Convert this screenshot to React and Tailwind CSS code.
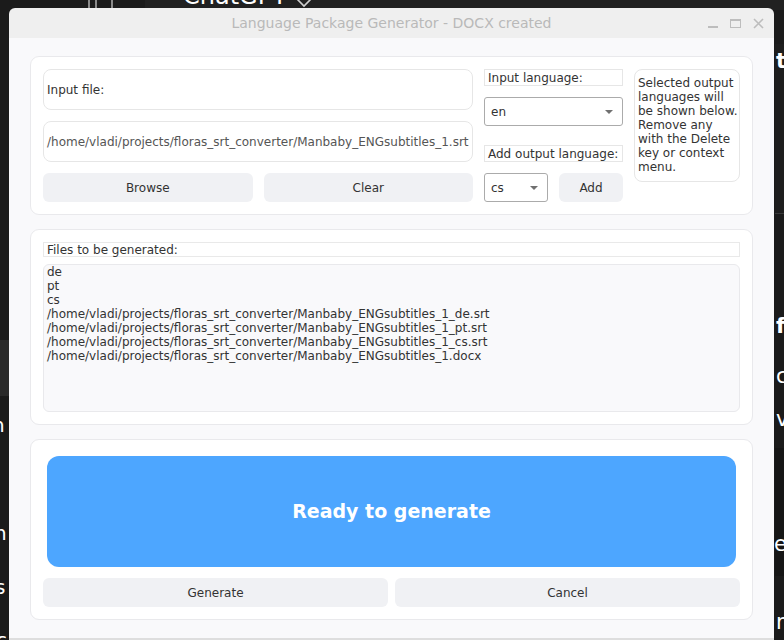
import React from "react";

const FONT = { fontFamily: '"DejaVu Sans", "Liberation Sans", sans-serif' };

function Combo({ value, className }) {
  return (
    <div className={"h-[29px] flex items-center justify-between pl-[6px] pr-[9px] bg-white border border-[#ababab] rounded-[3px] text-[12px] text-[#333] " + className}>
      <span>{value}</span>
      <svg width="8" height="4" viewBox="0 0 8 4"><path d="M0 0 L8 0 L4 4 Z" fill="#707070" /></svg>
    </div>
  );
}

function Btn({ children, className }) {
  return (
    <div className={"h-[29px] flex items-center justify-center bg-[#f0f1f4] rounded-[6px] text-[12px] text-[#333] " + className}>
      {children}
    </div>
  );
}

export default function App() {
  const files = [
    "de",
    "pt",
    "cs",
    "/home/vladi/projects/floras_srt_converter/Manbaby_ENGsubtitles_1_de.srt",
    "/home/vladi/projects/floras_srt_converter/Manbaby_ENGsubtitles_1_pt.srt",
    "/home/vladi/projects/floras_srt_converter/Manbaby_ENGsubtitles_1_cs.srt",
    "/home/vladi/projects/floras_srt_converter/Manbaby_ENGsubtitles_1.docx",
  ];
  return (
    <div className="relative w-[784px] h-[640px] overflow-hidden bg-[#1b1b1b]" style={FONT}>
      {/* desktop background fragments */}
      <div className="absolute left-[145px] top-0 w-[640px] h-[10px] bg-[#212121]" />
      <div className="absolute left-[88px] top-0 w-[25px] h-[8px] border-x-2 border-[#8a8a8a]" />
      <div className="absolute left-[95px] top-0 w-[2px] h-[8px] bg-[#8a8a8a]" />
      <div className="absolute left-[183px] top-[-19px] text-[24px] text-white leading-[30px]">ChatGPT</div>
      <svg className="absolute left-[295px] top-0" width="18" height="8" viewBox="0 0 18 8"><path d="M1 -2 L9 6 L17 -2" stroke="#cfcfcf" strokeWidth="1.6" fill="none" /></svg>
      <div className="absolute left-0 top-[340px] w-[10px] h-[56px] bg-[#2a2a2a]" />
      <div className="absolute left-[-8px] top-[410px] text-[20px] text-white">n</div>
      <div className="absolute left-[-6px] top-[518px] text-[20px] text-white">n</div>
      <div className="absolute left-[-5px] top-[572px] text-[20px] text-white">s</div>
      <div className="absolute left-[-4px] top-[625px] text-[20px] text-white">c</div>
      <div className="absolute left-[775px] top-[44px] w-[10px] h-[170px] bg-[#1e1e1e] border-b border-[#3a3a3a]" />
      <div className="absolute left-[776px] top-[46px] text-[21px] font-bold text-white">to</div>
      <div className="absolute left-[776px] top-[311px] text-[21px] font-bold text-white">fi</div>
      <div className="absolute left-[776px] top-[361px] text-[21px] text-white">c</div>
      <div className="absolute left-[776px] top-[404px] text-[21px] text-white">va</div>
      <div className="absolute left-[775px] top-[448px] w-[10px] h-[128px] bg-[#161616]" />
      <div className="absolute left-[774px] top-[529px] text-[21px] text-white">ed</div>
      <div className="absolute left-[776px] top-[607px] text-[21px] text-white">m</div>

      {/* window */}
      <div className="absolute left-[9px] top-[8px] w-[765px] h-[632px] flex flex-col rounded-t-[6px] overflow-hidden">
        <div className="relative h-[30px] shrink-0 bg-[#efefef] flex items-center justify-center">
          <span className="text-[14px] text-[#b9b9b9]">Language Package Generator - DOCX created</span>
          <div className="absolute right-[10px] top-0 h-[30px] flex items-center gap-[12px]">
            <div className="w-[10px] h-[10px] flex items-end"><div className="w-[10px] h-[2px] bg-[#bdbdbd]" /></div>
            <div className="w-[11px] h-[9px] border border-[#bdbdbd] border-t-2" />
            <svg width="11" height="11" viewBox="0 0 11 11"><path d="M1 1 L10 10 M10 1 L1 10" stroke="#bdbdbd" strokeWidth="1.6" /></svg>
          </div>
        </div>
        <div className="flex-1 bg-[#f9f9fb] px-[21px] pt-[18px] flex flex-col gap-[14px] border-b-2 border-[#dedede]">
          {/* card 1 */}
          <div className="bg-white border border-[#e9e9ec] rounded-[9px] p-[12px] flex gap-[11px]">
            <div className="w-[430px] flex flex-col gap-[11px]">
              <div className="h-[41px] border border-[#e6e6e6] rounded-[8px] flex items-center pl-[3px] text-[12px] text-[#333]">Input file:</div>
              <div className="h-[41px] border border-[#e6e6e6] rounded-[8px] flex items-center pl-[3px] text-[12px] text-[#555] whitespace-nowrap">/home/vladi/projects/floras_srt_converter/Manbaby_ENGsubtitles_1.srt</div>
              <div className="flex gap-[11px]">
                <Btn className="flex-1">Browse</Btn>
                <Btn className="flex-1">Clear</Btn>
              </div>
            </div>
            <div className="w-[139px] flex flex-col">
              <div className="h-[17px] border border-[#e6e6e6] flex items-center pl-[3px] text-[12px] text-[#333]">Input language:</div>
              <Combo value="en" className="mt-[11px]" />
              <div className="mt-[19px] h-[17px] border border-[#e6e6e6] flex items-center pl-[3px] text-[12px] text-[#333] whitespace-nowrap">Add output language:</div>
              <div className="mt-[11px] flex gap-[11px]">
                <Combo value="cs" className="w-[64px]" />
                <Btn className="w-[64px]">Add</Btn>
              </div>
            </div>
            <div className="w-[106px] h-[113px] border border-[#e6e6e6] rounded-[8px] pl-[3px] pt-[6px] text-[12px] leading-[14px] text-[#333]">
              Selected output languages will be shown below. Remove any with the Delete key or context menu.
            </div>
          </div>

          {/* card 2 */}
          <div className="bg-white border border-[#e9e9ec] rounded-[9px] p-[12px] flex flex-col gap-[7px]">
            <div className="h-[15px] border border-[#e9e9e9] flex items-center pl-[3px] text-[12px] text-[#333]">Files to be generated:</div>
            <div className="h-[148px] bg-[#f9f9fb] border border-[#e9e9ec] rounded-[6px] pl-[3px] pt-[0px] text-[12px] leading-[14px] text-[#333]">
              {files.map((f, i) => (
                <div key={i}>{f}</div>
              ))}
            </div>
          </div>

          {/* card 3 */}
          <div className="bg-white border border-[#e9e9ec] rounded-[9px] p-[12px] flex flex-col gap-[11px]">
            <div className="mx-[4px] mt-[4px] h-[111px] bg-[#4da6ff] rounded-[12px] flex items-center justify-center text-white font-bold text-[19px]">
              Ready to generate
            </div>
            <div className="flex gap-[7px]">
              <Btn className="flex-1">Generate</Btn>
              <Btn className="flex-1">Cancel</Btn>
            </div>
          </div>
        </div>
      </div>
    </div>
  );
}
